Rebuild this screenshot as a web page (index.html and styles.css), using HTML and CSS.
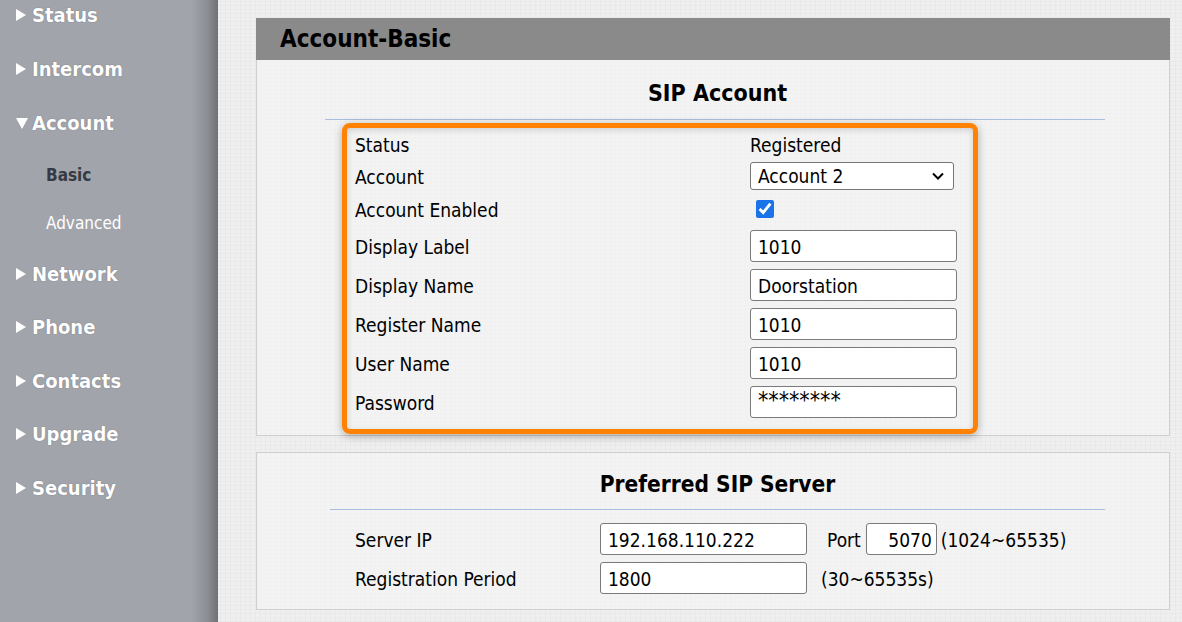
FILE: index.html
```html
<!DOCTYPE html>
<html lang="en">

<head>
    <meta charset="UTF-8">
    <meta name="viewport" content="width=device-width, initial-scale=1.0">
    <title>Account-Basic</title>
    <link rel="stylesheet" href="styles.css">
</head>

<body>
    <div class="sidebar">
        <div class="menu-item"><span class="arrow"></span>Status</div>
        <div class="menu-item"><span class="arrow"></span>Intercom</div>
        <div class="menu-item"><span class="arrow open"></span>Account</div>
        <div class="sub-item active">Basic</div>
        <div class="sub-item last">Advanced</div>
        <div class="menu-item"><span class="arrow"></span>Network</div>
        <div class="menu-item"><span class="arrow"></span>Phone</div>
        <div class="menu-item"><span class="arrow"></span>Contacts</div>
        <div class="menu-item"><span class="arrow"></span>Upgrade</div>
        <div class="menu-item"><span class="arrow"></span>Security</div>
    </div>

    <div class="main">
        <div class="panel-title">Account-Basic</div>

        <div class="panel">
            <div class="section-title">SIP Account</div>
            <div class="divider"></div>
            <div class="highlight">
                <div class="row row-short">
                    <div class="label">Status</div>
                    <div class="value value-text">Registered</div>
                </div>
                <div class="row row-short">
                    <div class="label">Account</div>
                    <div class="value select-wrap">
                        <select class="select">
                            <option>Account 2</option>
                        </select>
                        <svg class="chevron" width="12" height="8" viewBox="0 0 12 8">
                            <path d="M1 1.5 L6 6.5 L11 1.5" fill="none" stroke="#000" stroke-width="2"/>
                        </svg>
                    </div>
                </div>
                <div class="row row-check">
                    <div class="label">Account Enabled</div>
                    <div class="value"><input class="check" type="checkbox" checked></div>
                </div>
                <div class="row">
                    <div class="label">Display Label</div>
                    <div class="value"><input class="field" type="text" value="1010"></div>
                </div>
                <div class="row">
                    <div class="label">Display Name</div>
                    <div class="value"><input class="field" type="text" value="Doorstation"></div>
                </div>
                <div class="row">
                    <div class="label">Register Name</div>
                    <div class="value"><input class="field" type="text" value="1010"></div>
                </div>
                <div class="row">
                    <div class="label">User Name</div>
                    <div class="value"><input class="field" type="text" value="1010"></div>
                </div>
                <div class="row">
                    <div class="label">Password</div>
                    <div class="value"><input class="field password" type="text" value="********"></div>
                </div>
            </div>
        </div>

        <div class="panel panel-server">
            <div class="section-title">Preferred SIP Server</div>
            <div class="divider"></div>
            <div class="server-rows">
                <div class="row">
                    <div class="label server-label">Server IP</div>
                    <input class="field" type="text" value="192.168.110.222">
                    <span class="port-label">Port</span>
                    <input class="field port" type="text" value="5070">
                    <span class="hint">(1024~65535)</span>
                </div>
                <div class="row">
                    <div class="label server-label">Registration Period</div>
                    <input class="field" type="text" value="1800">
                    <span class="hint hint-period">(30~65535s)</span>
                </div>
            </div>
        </div>
    </div>
</body>

</html>
```

FILE: styles.css
```css
* {
    margin: 0;
    padding: 0;
    box-sizing: border-box;
}

body {
    width: 100vw;
    height: 100vh;
    overflow: hidden;
    display: flex;
    font-family: "DejaVu Sans Condensed", "DejaVu Sans", sans-serif;
    font-size: 19px;
    color: #000;
    background-color: #efefef;
    background-image:
        repeating-linear-gradient(0deg, rgba(0, 0, 0, 0.018) 0, rgba(0, 0, 0, 0.018) 1px, transparent 1px, transparent 4px),
        repeating-linear-gradient(90deg, rgba(0, 0, 0, 0.018) 0, rgba(0, 0, 0, 0.018) 1px, transparent 1px, transparent 5px);
}

/* left menu */
.sidebar {
    width: 218px;
    flex-shrink: 0;
    height: 100%;
    padding-top: 1px;
    background: linear-gradient(to right, #a1a4ab 0, #a1a4ab 192px, #8a8c92 208px, #6f7176 218px);
}

.menu-item {
    height: 54px;
    display: flex;
    align-items: center;
    margin-top: -13px;
    margin-bottom: 13px;
    padding-left: 16px;
    color: #fff;
    font-weight: bold;
    font-size: 20px;
    text-shadow: 0 0 1px rgba(60, 60, 70, 0.6);
}

.sub-item.last ~ .menu-item {
    height: 53.5px;
}

.arrow {
    width: 0;
    height: 0;
    margin-right: 6px;
    border-left: 10px solid #fff;
    border-top: 6px solid transparent;
    border-bottom: 6px solid transparent;
}

.arrow.open {
    border-left: 6px solid transparent;
    border-right: 6px solid transparent;
    border-top: 11px solid #fff;
    border-bottom: 0;
    margin-right: 4px;
}

.sub-item {
    height: 46px;
    display: flex;
    align-items: center;
    margin-top: -13px;
    margin-bottom: 13px;
    padding-left: 46px;
    color: #fff;
    font-size: 17px;
}

.sub-item.active {
    color: #353a44;
    font-weight: bold;
    height: 50px;
}

.sub-item.last {
    margin-bottom: 14px;
}

/* content */
.main {
    flex: 1;
    padding: 18px 12px 0 38px;
}

.panel-title {
    height: 42px;
    display: flex;
    align-items: center;
    padding-left: 24px;
    background: #8a8a8a;
    font-size: 24px;
    font-weight: bold;
}

.panel {
    border: 1px solid #cfcfcf;
    border-top: 0;
    background: rgba(245, 245, 245, 0.6);
    padding-top: 18px;
    padding-bottom: 1px;
}

.panel-server {
    border-top: 1px solid #cfcfcf;
    margin-top: 16px;
    padding-top: 16px;
    padding-bottom: 12px;
}

.section-title {
    height: 30px;
    line-height: 30px;
    padding-left: 9px;
    text-align: center;
    font-size: 23px;
    font-weight: bold;
}

.panel-server .section-title {
    font-size: 22.5px;
}

.divider {
    height: 1px;
    margin: 11px 64px 0 68px;
    background: #a9bde0;
}

.panel-server .divider {
    margin-left: 73px;
    margin-top: 10px;
}

.highlight {
    width: 636px;
    margin: 3px 0 0 85px;
    padding: 0 0 8px 8px;
    border: 5px solid #ff8205;
    border-radius: 8px;
    box-shadow: 0 2px 8px rgba(0, 0, 0, 0.3), inset 0 2px 6px rgba(0, 0, 0, 0.15);
}

.row {
    height: 39px;
    display: flex;
    align-items: center;
}

.row-short {
    height: 32px;
}

.row-check {
    height: 34px;
}

.label {
    width: 395px;
    flex-shrink: 0;
    padding-top: 3px;
}

.row-short .label,
.row-check .label,
.value-text {
    padding-top: 2px;
}

.value {
    display: flex;
    align-items: center;
}

.select-wrap {
    position: relative;
}

.select {
    width: 204px;
    height: 28px;
    padding-left: 7px;
    border: 1px solid #767676;
    border-radius: 3px;
    background: #fff;
    font-family: inherit;
    font-size: 19px;
    color: #000;
    appearance: none;
}

.chevron {
    position: absolute;
    right: 10px;
    top: 10px;
}

.check {
    width: 18px;
    height: 18px;
    margin-left: 6px;
    accent-color: #1a73e8;
}

.field {
    width: 207px;
    height: 32px;
    padding: 3px 0 0 7px;
    border: 1px solid #7a7a7a;
    border-radius: 3px;
    background: #fff;
    font-family: inherit;
    font-size: 19px;
    color: #000;
}

.password {
    font-size: 23px;
    padding-top: 0;
    padding-bottom: 4px;
}

.server-rows {
    margin-top: 9px;
    padding-left: 98px;
}

.server-label {
    width: 245px;
}

.port-label {
    margin-left: 20px;
    margin-right: 5px;
    padding-top: 3px;
}

.field.port {
    width: 71px;
    text-align: right;
    padding-right: 4px;
}

.hint {
    margin-left: 4px;
    padding-top: 3px;
}

.hint-period {
    margin-left: 14px;
}
```
